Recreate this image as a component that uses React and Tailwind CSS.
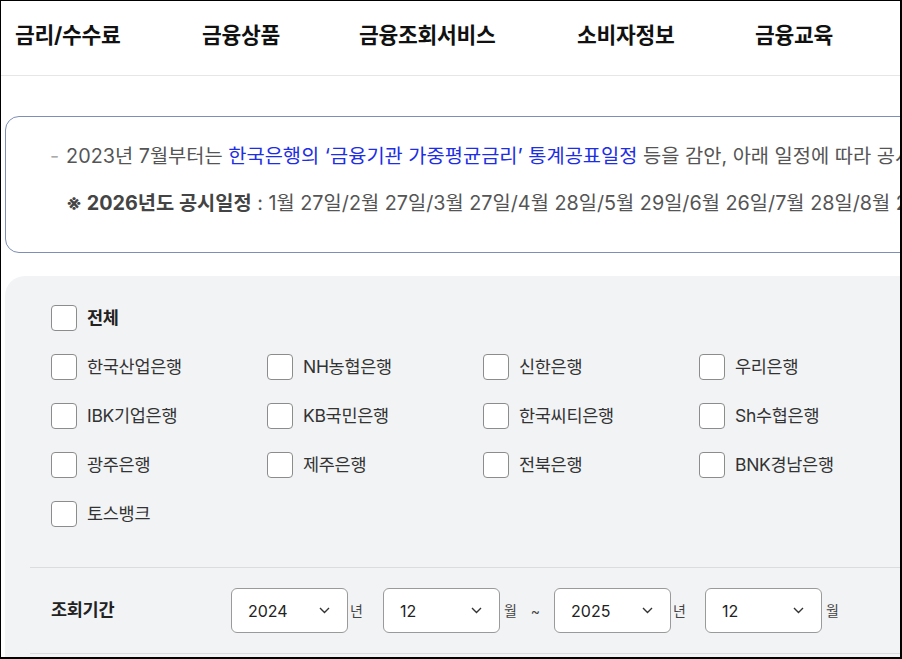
const NAV = [
  { label: '금리/수수료', w: 'w-[187px]' },
  { label: '금융상품', w: 'w-[157px]' },
  { label: '금융조회서비스', w: 'w-[218px]' },
  { label: '소비자정보', w: 'w-[178px]' },
  { label: '금융교육', w: 'w-[140px]' },
];

const BANKS = [
  '한국산업은행', 'NH농협은행', '신한은행', '우리은행',
  'IBK기업은행', 'KB국민은행', '한국씨티은행', 'Sh수협은행',
  '광주은행', '제주은행', '전북은행', 'BNK경남은행',
  '토스뱅크',
];

const font = { fontFamily: 'Inter, "Noto Sans CJK KR", "Noto Sans", sans-serif' };

function Checkbox({ label, bold }) {
  return (
    <label className="flex items-center h-[26px]">
      <span className="w-[26px] h-[26px] shrink-0 bg-white border border-[#8c8c8c] rounded-[4px]" />
      <span
        className={`ml-[10px] text-[17.5px] leading-[26px] tracking-[-0.3px] whitespace-nowrap ${
          bold ? 'font-bold text-[#222]' : 'text-[#333]'
        }`}
      >
        {label}
      </span>
    </label>
  );
}

function Select({ value }) {
  return (
    <div className="w-[117px] h-[45px] shrink-0 bg-white border border-[#9a9a9a] rounded-[6px] flex items-center justify-between pl-[16px] pr-[17px]">
      <span className="text-[16px] text-[#222]">{value}</span>
      <svg width="11" height="7" viewBox="0 0 11 7" fill="none">
        <path d="M1 1L5.5 5.5L10 1" stroke="#333" strokeWidth="1.4" />
      </svg>
    </div>
  );
}

export default function App() {
  return (
    <div
      className="w-[902px] h-[659px] overflow-hidden bg-white border-l border-t border-r-2 border-b-2 border-black"
      style={font}
    >
      {/* Header nav */}
      <div className="h-[75px] border-b border-[#e6e6e6] flex items-center pl-[14px] pb-[6px]">
        {NAV.map(n => (
          <span
            key={n.label}
            className={`${n.w} shrink-0 text-[21.5px] font-bold text-[#111] tracking-[-0.3px] whitespace-nowrap`}
          >
            {n.label}
          </span>
        ))}
      </div>

      {/* Notice */}
      <div className="ml-[4px] mt-[40px] w-[1100px] h-[137px] border border-[#7d8fb6] rounded-[14px] pl-[44px] pt-[25px] text-[19.8px] whitespace-nowrap">
        <div className="leading-[28px] text-[#555]">
          <span className="text-[#aaa] mr-[7px]">-</span>
          2023년 7월부터는{' '}
          <span className="text-[#1d2ee6]">한국은행의 ‘금융기관 가중평균금리’ 통계공표일정</span>{' '}
          등을 감안, 아래 일정에 따라 공시합니다.
        </div>
        <div className="leading-[28px] mt-[19px] pl-[16px] text-[#555]">
          <span className="font-bold text-[#444]">※ 2026년도 공시일정</span> : 1월 27일/2월 27일/3월 27일/4월 28일/5월 29일/6월 26일/7월 28일/8월 27일
        </div>
      </div>

      {/* Filter panel */}
      <div className="ml-[4px] mt-[23px] w-[1000px] h-[400px] bg-[#f2f3f5] rounded-tl-[20px] pl-[25px]">
        <div className="pl-[21px] pt-[29px] pb-[40px]">
          <Checkbox label="전체" bold />
          <div className="grid grid-cols-[216px_216px_216px_216px] gap-y-[23px] mt-[23px]">
            {BANKS.map(b => (
              <Checkbox key={b} label={b} />
            ))}
          </div>
        </div>

        <div className="border-t border-b border-[#dcdcdc] py-[20px] flex items-center">
          <div className="w-[201px] pl-[21px] text-[17.5px] font-bold text-[#222] tracking-[-0.3px]">조회기간</div>
          <Select value="2024" />
          <span className="ml-[2px] mr-[20px] text-[14px] text-[#444]">년</span>
          <Select value="12" />
          <span className="ml-[4px] text-[14px] text-[#444]">월</span>
          <span className="mx-[14px] text-[14px] text-[#444]">~</span>
          <Select value="2025" />
          <span className="ml-[2px] mr-[19px] text-[14px] text-[#444]">년</span>
          <Select value="12" />
          <span className="ml-[4px] text-[14px] text-[#444]">월</span>
        </div>
      </div>
    </div>
  );
}
